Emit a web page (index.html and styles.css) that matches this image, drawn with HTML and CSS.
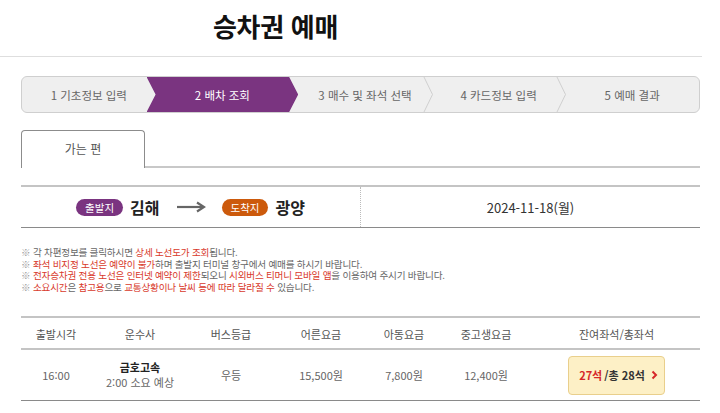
FILE: index.html
```html
<!DOCTYPE html>
<html lang="ko">
<head>
<meta charset="utf-8">
<title>승차권 예매</title>
<link rel="stylesheet" href="styles.css">
</head>
<body>
<div class="page">
  <header class="header">
    <h1 class="title">승차권 예매</h1>
  </header>

  <div class="content">
    <ol class="steps">
      <li class="step">1 기초정보 입력</li>
      <li class="step active">2 배차 조회</li>
      <li class="step sep">3 매수 및 좌석 선택<svg class="chev" width="10" height="37" viewBox="0 0 10 37"><polyline points="0.5,0 9.5,18.5 0.5,37" fill="none" stroke="#cfcfcf" stroke-width="1"/></svg></li>
      <li class="step sep">4 카드정보 입력<svg class="chev" width="10" height="37" viewBox="0 0 10 37"><polyline points="0.5,0 9.5,18.5 0.5,37" fill="none" stroke="#cfcfcf" stroke-width="1"/></svg></li>
      <li class="step">5 예매 결과</li>
    </ol>

    <div class="tabs">
      <div class="tab">가는 편</div>
      <div class="tab-line"></div>
    </div>

    <div class="route">
      <div class="route-places">
        <span class="badge badge-dep">출발지</span>
        <span class="place">김해</span>
        <svg class="arrow" width="30" height="12" viewBox="0 0 30 12"><path d="M1 6 H27" stroke="#666" stroke-width="2.2" fill="none"/><path d="M21 1.5 L28 6 L21 10.5" stroke="#666" stroke-width="2.2" fill="none" stroke-linejoin="miter"/></svg>
        <span class="badge badge-arr">도착지</span>
        <span class="place">광양</span>
      </div>
      <div class="route-date">2024-11-18(월)</div>
    </div>

    <ul class="notes">
      <li><span class="mark">※</span> 각 차편정보를 클릭하시면 <em>상세 노선도가 조회</em>됩니다.</li>
      <li><span class="mark">※</span> <em>좌석 비지정 노선은 예약이 불가</em>하며 출발지 터미널 창구에서 예매를 하시기 바랍니다.</li>
      <li><span class="mark">※</span> <em>전자승차권 전용 노선은 인터넷 예약이 제한</em>되오니 <em>시외버스 티머니 모바일 앱</em>을 이용하여 주시기 바랍니다.</li>
      <li><span class="mark">※</span> <em>소요시간</em>은 <em>참고용</em>으로 <em>교통상황이나 날씨 등에 따라 달라질 수</em> 있습니다.</li>
    </ul>

    <table class="bus-table">
      <colgroup>
        <col class="c1"><col class="c2"><col class="c3"><col class="c4"><col class="c5"><col class="c6"><col class="c7">
      </colgroup>
      <thead>
        <tr>
          <th>출발시각</th><th>운수사</th><th>버스등급</th><th>어른요금</th><th>아동요금</th><th>중고생요금</th><th>잔여좌석/총좌석</th>
        </tr>
      </thead>
      <tbody>
        <tr>
          <td>16:00</td>
          <td><div class="company">금호고속</div><div class="duration">2:00 소요 예상</div></td>
          <td>우등</td>
          <td>15,500원</td>
          <td>7,800원</td>
          <td>12,400원</td>
          <td><button class="seat-btn"><span class="remain">27석</span> /총 28석<svg class="go" width="7" height="10" viewBox="0 0 7 10"><path d="M1.5 1.5 L5 5 L1.5 8.5" fill="none" stroke="#d6282a" stroke-width="2"/></svg></button></td>
        </tr>
      </tbody>
    </table>
  </div>
</div>
</body>
</html>
```

FILE: styles.css
```css
* { box-sizing: border-box; }

html, body {
  margin: 0;
  padding: 0;
  background: #fff;
}

body {
  font-family: "Noto Sans CJK KR", "Noto Sans", sans-serif;
  color: #333;
  width: 720px;
  overflow: hidden;
}

.page {
  width: 720px;
}

.header {
  width: 702px;
  height: 57px;
  border-bottom: 1px solid #dedede;
  padding: 8px 0 0 213px;
}

.title {
  margin: 0;
  font-size: 26px;
  line-height: 36px;
  font-weight: 700;
  color: #111;
  letter-spacing: -0.3px;
}

.content {
  padding: 19px 20px 0 21px;
}

/* steps */
.steps {
  list-style: none;
  margin: 0;
  padding: 0;
  display: flex;
  width: 679px;
  height: 37px;
  background: #efefef;
  border: 1px solid #cfcfcf;
  border-radius: 6px;
  overflow: hidden;
}

.step {
  position: relative;
  flex: 1 1 0;
  display: flex;
  align-items: center;
  justify-content: center;
  font-size: 11.5px;
  color: #666;
  white-space: nowrap;
}

.step.active {
  color: #fff;
  z-index: 1;
  padding-right: 9px;
}

.step.active::before {
  content: "";
  position: absolute;
  top: 0;
  bottom: 0;
  left: -9px;
  right: 0;
  background: #7a3480;
  clip-path: polygon(0 0, calc(100% - 9px) 0, 100% 50%, calc(100% - 9px) 100%, 0 100%, 9px 50%);
  z-index: -1;
}

.chev {
  position: absolute;
  top: -1px;
  right: -1px;
}

/* tabs */
.tabs {
  margin-top: 17px;
  display: flex;
  align-items: flex-end;
  width: 679px;
}

.tab {
  width: 124px;
  height: 38px;
  border: 1px solid #8c8c8c;
  border-bottom: none;
  border-radius: 4px 4px 0 0;
  display: flex;
  align-items: center;
  justify-content: center;
  font-size: 12px;
  color: #555;
  padding-bottom: 2px;
}

.tab-line {
  flex: 1;
  height: 2px;
  background: #c8c8c8;
}

/* route */
.route {
  margin-top: 17px;
  width: 679px;
  height: 43px;
  display: flex;
  border-top: 2px solid #c4c4c4;
  border-bottom: 1px solid #8a8a8a;
}

.route-places {
  width: 339px;
  display: flex;
  align-items: center;
  justify-content: center;
}

.badge {
  display: inline-flex;
  align-items: center;
  height: 17px;
  padding: 0 9px;
  border-radius: 9px;
  font-size: 10.5px;
  color: #fff;
}

.badge-dep { background: #7a3480; }
.badge-arr { background: #cc5a0c; }

.place {
  font-size: 16px;
  font-weight: 700;
  color: #222;
  margin-left: 7px;
}

.arrow {
  margin: 0 16px 0 16px;
}

.route-date {
  flex: 1;
  display: flex;
  align-items: center;
  justify-content: center;
  font-size: 13px;
  color: #333;
  border-left: 1px dotted #bbb;
}

/* notes */
.notes {
  list-style: none;
  margin: 19px 0 0 0;
  padding: 0;
  font-size: 9.6px;
  line-height: 11.7px;
  color: #666;
  letter-spacing: -0.2px;
}

.notes li {
  height: 11.7px;
  white-space: nowrap;
}

.notes .mark {
  color: #999;
}

.notes em {
  font-style: normal;
  color: #d8392b;
}

/* table */
.bus-table {
  margin-top: 22px;
  width: 679px;
  border-collapse: collapse;
  table-layout: fixed;
  font-size: 11px;
}

.c1 { width: 70px; }
.c2 { width: 98px; }
.c3 { width: 84px; }
.c4 { width: 96px; }
.c5 { width: 70px; }
.c6 { width: 94px; }
.c7 { width: 167px; }

.bus-table th {
  height: 32px;
  font-weight: 400;
  color: #555;
  border-top: 2px solid #c4c4c4;
  border-bottom: 2px solid #c4c4c4;
  text-align: center;
  padding: 2px 0 0 0;
}

.bus-table td {
  height: 52px;
  text-align: center;
  color: #666;
  border-bottom: 1px solid #8a8a8a;
  padding: 0;
}

.company {
  font-weight: 700;
  color: #222;
  line-height: 15px;
}

.duration {
  line-height: 15px;
}

.seat-btn {
  width: 97px;
  height: 39px;
  margin-left: 0;
  background: #fdf0c6;
  border: 1px solid #e9cf8c;
  border-radius: 4px;
  font-family: inherit;
  font-size: 11px;
  font-weight: 700;
  color: #333;
  display: inline-flex;
  align-items: center;
  justify-content: center;
  padding: 0 0 0 4px;
}

.remain {
  color: #d6282a;
  margin-right: 2px;
}

.go {
  margin-left: 6px;
}
```
